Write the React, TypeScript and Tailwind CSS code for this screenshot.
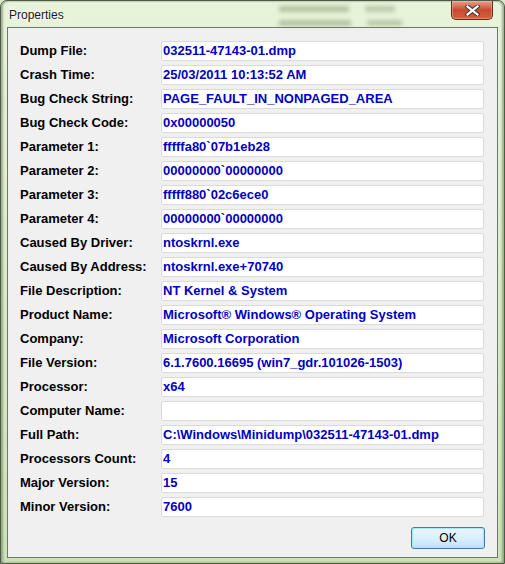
const rows: [string, string][] = [
  ["Dump File:", "032511-47143-01.dmp"],
  ["Crash Time:", "25/03/2011 10:13:52 AM"],
  ["Bug Check String:", "PAGE_FAULT_IN_NONPAGED_AREA"],
  ["Bug Check Code:", "0x00000050"],
  ["Parameter 1:", "fffffa80`07b1eb28"],
  ["Parameter 2:", "00000000`00000000"],
  ["Parameter 3:", "fffff880`02c6ece0"],
  ["Parameter 4:", "00000000`00000000"],
  ["Caused By Driver:", "ntoskrnl.exe"],
  ["Caused By Address:", "ntoskrnl.exe+70740"],
  ["File Description:", "NT Kernel & System"],
  ["Product Name:", "Microsoft® Windows® Operating System"],
  ["Company:", "Microsoft Corporation"],
  ["File Version:", "6.1.7600.16695 (win7_gdr.101026-1503)"],
  ["Processor:", "x64"],
  ["Computer Name:", ""],
  ["Full Path:", "C:\\Windows\\Minidump\\032511-47143-01.dmp"],
  ["Processors Count:", "4"],
  ["Major Version:", "15"],
  ["Minor Version:", "7600"],
];

function CloseButton() {
  return (
    <div className="w-[42px] h-[19px] rounded-b-[5px] border border-t-0 border-[#5e2c22] bg-gradient-to-b from-[#e6a08e] via-[#c64a2e] to-[#d65e3e] shadow-[inset_0_0_0_1px_rgba(255,200,185,0.4)] flex items-center justify-center">
      <svg width="15" height="11" viewBox="0 0 15 11">
        <path d="M2.5 1.5 L12.5 9.5 M12.5 1.5 L2.5 9.5" stroke="#4a3a3a" strokeWidth="4.2" strokeLinecap="square" />
        <path d="M2.5 1.5 L12.5 9.5 M12.5 1.5 L2.5 9.5" stroke="#ffffff" strokeWidth="2.2" strokeLinecap="square" />
      </svg>
    </div>
  );
}

function Field({ value }: { value: string }) {
  return (
    <div className="w-[323px] h-[20px] bg-white border border-[#dadada] rounded-[2px] pl-[1px] flex items-center text-[13px] font-bold text-[#0000c4] whitespace-nowrap overflow-hidden">
      {value}
    </div>
  );
}

export default function App() {
  return (
    <div className="w-[505px] h-[564px] overflow-hidden bg-[#dbe9cb] font-['Liberation_Sans',Arial,sans-serif]">
      <div className="w-full h-full flex flex-col border border-[#4d5a48] rounded-t-[7px] bg-gradient-to-b from-[#e8f4da] via-[#dbecc6] to-[#cde1b6] shadow-[inset_2px_0_2px_rgba(60,80,50,0.4),inset_-2px_0_2px_rgba(60,80,50,0.4)]">
        {/* title bar */}
        <div className="h-[26px] flex items-start">
          <div className="pl-[8px] pt-[6px] text-[12px] text-[#1b1b1b] leading-[16px] [text-shadow:0_0_6px_#ffffff,0_0_3px_#ffffff]">
            Properties
          </div>
          <div className="flex-1 flex flex-col gap-[8px] pt-[5px] pl-[215px] opacity-50">
            <div className="flex gap-[16px]">
              <div className="w-[70px] h-[6px] bg-[#7f9470] blur-[2px]" />
              <div className="w-[30px] h-[6px] bg-[#8da07f] blur-[2px]" />
            </div>
            <div className="flex gap-[16px]">
              <div className="w-[72px] h-[6px] bg-[#7f9470] blur-[2px]" />
              <div className="w-[35px] h-[6px] bg-[#8da07f] blur-[2px]" />
            </div>
          </div>
          <div className="mr-[11px]">
            <CloseButton />
          </div>
        </div>

        {/* client area */}
        <div className="mx-[6px] mb-[5px] flex-1 border border-[#6e7869] bg-[#f0f0f0] flex flex-col pt-[13px] pl-[12px] pr-[12px] pb-[8px]">
          <div className="flex flex-col gap-[4px]">
            {rows.map(([label, value]) => (
              <div key={label} className="flex items-center h-[20px]">
                <div className="w-[141px] text-[13px] font-bold text-black whitespace-nowrap">{label}</div>
                <Field value={value} />
              </div>
            ))}
          </div>
          <div className="flex justify-end mt-[10px]">
            <button className="w-[74px] h-[22px] rounded-[3px] border border-[#3c7fb1] bg-gradient-to-b from-[#eaf6fd] via-[#d9f0fc] to-[#bfe2f5] shadow-[inset_0_0_0_1px_#a8e6fb] text-[12px] text-black flex items-center justify-center">
              OK
            </button>
          </div>
        </div>
      </div>
    </div>
  );
}
